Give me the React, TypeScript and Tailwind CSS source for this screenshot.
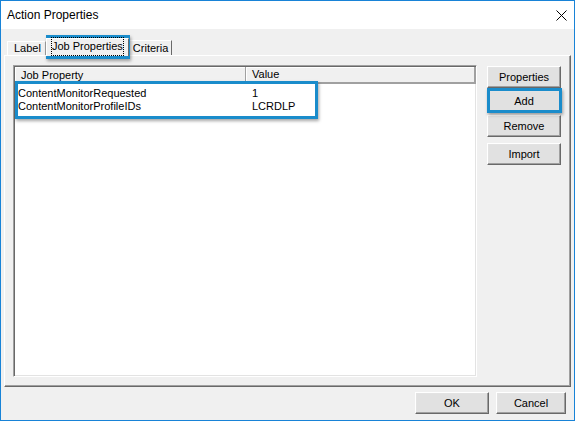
import React from "react";

const font = { fontFamily: '"Liberation Sans", Arial, sans-serif' };

function Button({ label, className = "" }: { label: string; className?: string }) {
  return (
    <div
      className={`flex h-[22px] items-center justify-center border border-t-white border-l-white border-b-[#696969] border-r-[#696969] bg-[#e1e1e1] text-[11px] text-black shadow-[inset_-1px_-1px_0_#a0a0a0,inset_1px_1px_0_#e3e3e3] ${className}`}
    >
      {label}
    </div>
  );
}

// annotation frame drawn over the screenshot
function Callout({ className }: { className: string }) {
  return (
    <div
      className={`pointer-events-none absolute border-[3px] border-[#1a8ccb] shadow-[1px_2px_3px_rgba(0,0,0,0.35)] ${className}`}
    />
  );
}

export default function App() {
  return (
    <div
      style={font}
      className="relative flex h-[421px] w-[575px] flex-col overflow-hidden border border-[#1883d7] bg-[#f0f0f0] text-black"
    >
      {/* Title bar */}
      <div className="flex h-[28px] items-center justify-between bg-white pl-[6px] pr-[7px]">
        <span className="text-[12px]">Action Properties</span>
        <svg width="11" height="11" viewBox="0 0 11 11">
          <path d="M0.5 0.5 L10.5 10.5 M10.5 0.5 L0.5 10.5" stroke="#000" strokeWidth="1" />
        </svg>
      </div>

      {/* Tabs */}
      <div className="relative flex h-[26px] items-end pl-[6px] text-[11px]">
        <div className="flex h-[14px] items-center border border-b-0 border-t-white border-l-white border-r-[#a0a0a0] pl-[6px] pr-[4px]">
          Label
        </div>
        <div className="relative z-10 -mb-[1px] flex h-[18px] items-center border border-b-0 border-t-white border-l-white border-r-[#696969] bg-[#f0f0f0] px-[5px] pb-[2px]">
          <span className="outline-1 outline-dotted outline-black outline-offset-0">Job Properties</span>
        </div>
        <div className="flex h-[15px] items-center border border-b-0 border-t-white border-l-white border-r-[#696969] pl-[3px] pr-[3px]">
          Criteria
        </div>
      </div>

      {/* Tab panel */}
      <div className="mx-[3px] flex h-[332px] gap-[10px] border border-t-white border-l-white border-b-[#696969] border-r-[#696969] pl-[8px] pr-[8px] pt-[9px] shadow-[inset_-1px_-1px_0_#a0a0a0]">
        {/* List view */}
        <div className="flex h-[312px] w-[464px] flex-col border border-t-[#a0a0a0] border-l-[#a0a0a0] border-b-white border-r-white bg-white text-[11px] shadow-[inset_1px_1px_0_#696969,inset_-1px_-1px_0_#e3e3e3]">
          <div className="ml-[1px] mt-[1px] flex h-[17px]">
            <div className="flex w-[231px] items-center border-r border-b border-r-[#a0a0a0] border-b-[#a0a0a0] bg-[#f0f0f0] pl-[6px] shadow-[inset_1px_1px_0_#fff]">
              Job Property
            </div>
            <div className="flex flex-1 items-center border-r-2 border-b-2 border-r-[#a0a0a0] border-b-[#a0a0a0] bg-[#f0f0f0] pl-[6px] shadow-[inset_1px_1px_0_#fff]">
              Value
            </div>
          </div>
          <div className="flex flex-col pt-[3px]">
            <div className="flex h-[13px] items-center">
              <span className="w-[233px] pl-[4px]">ContentMonitorRequested</span>
              <span className="pl-[5px]">1</span>
            </div>
            <div className="flex h-[13px] items-center">
              <span className="w-[233px] pl-[4px]">ContentMonitorProfileIDs</span>
              <span className="pl-[5px]">LCRDLP</span>
            </div>
          </div>
        </div>

        {/* Side buttons */}
        <div className="flex w-[74px] flex-col pt-[1px]">
          <Button label="Properties" />
          <Button label="Add" className="mt-[2px]" />
          <Button label="Remove" className="mt-[3px]" />
          <Button label="Import" className="mt-[6px]" />
        </div>
      </div>

      {/* Footer */}
      <div className="flex flex-1 items-start justify-end gap-[7px] pr-[8px] pt-[5px]">
        <Button label="OK" className="w-[74px]" />
        <Button label="Cancel" className="w-[70px]" />
      </div>

      <Callout className="left-[45px] top-[34px] h-[24px] w-[84px]" />
      <Callout className="left-[14px] top-[80px] h-[38px] w-[303px]" />
      <Callout className="left-[486px] top-[87px] h-[25px] w-[75px]" />
    </div>
  );
}
